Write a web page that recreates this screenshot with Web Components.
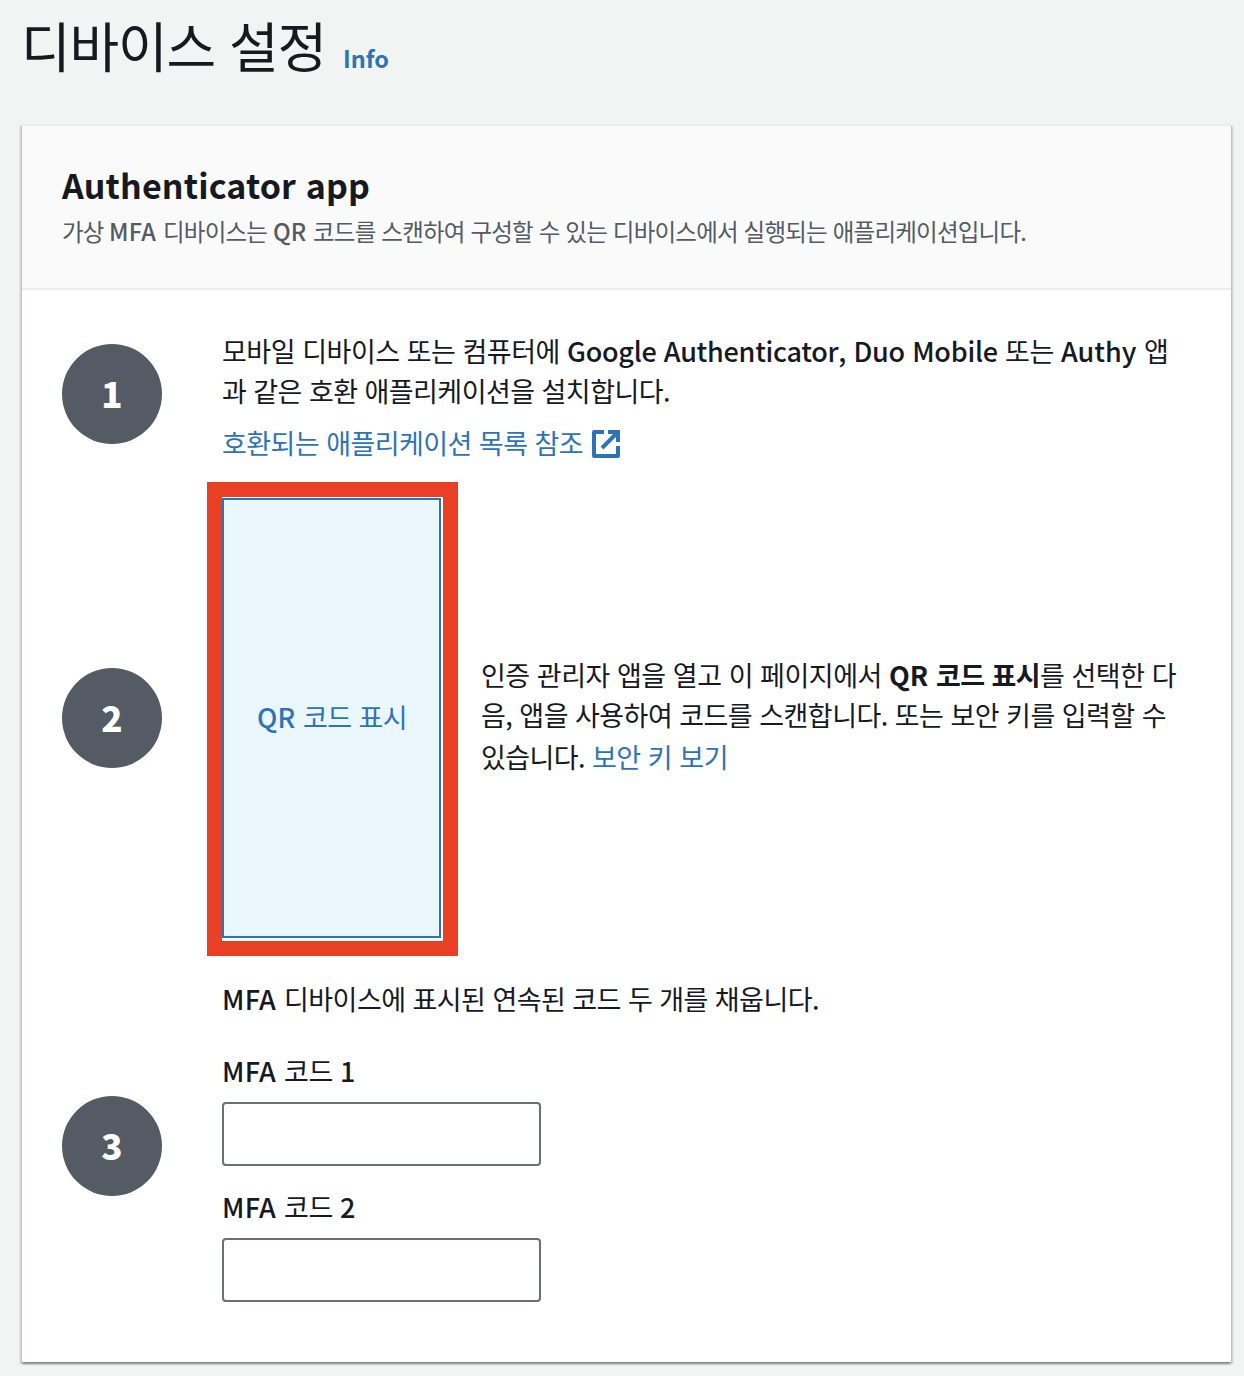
<!DOCTYPE html>
<html lang="ko">
<head>
<meta charset="utf-8">
<title>디바이스 설정</title>
<style>
    body {
        --color-text: #16191f;
        --color-link: #2e73b8;
        --color-muted: #545b64;
        margin: 0;
        min-height: 1376px;
        background: #f2f3f3;
        color: var(--color-text);
        font: 400 27px/40px "Noto Sans CJK KR", "Noto Sans", sans-serif;
    }
</style>
</head>
<body>

<mfa-page>
    <page-heading slot="heading">
        <text-run w="305">디바이스 설정</text-run>
        <text-run slot="info" w="46">Info</text-run>
    </page-heading>

    <setup-card>
        <text-run slot="title" w="308">Authenticator app</text-run>
        <text-line slot="description"><text-run w="47">가상 </text-run><text-run latin w="54">MFA </text-run><text-run w="110">디바이스는 </text-run><text-run latin w="40">QR </text-run><text-run w="713">코드를 스캔하여 구성할 수 있는 디바이스에서 실행되는 애플리케이션입니다.</text-run></text-line>

        <setup-step number="1" style="height: 140px">
            <div style="padding-top: 6px">
                <text-line><text-run w="345">모바일 디바이스 또는 컴퓨터에 </text-run><text-run latin w="438">Google Authenticator, Duo Mobile </text-run><text-run w="56">또는 </text-run><text-run latin w="83">Authy </text-run><text-run w="25">앱</text-run></text-line>
                <text-line><text-run w="448">과 같은 호환 애플리케이션을 설치합니다.</text-run></text-line>
                <link-text external style="margin-top: 12px"><text-run w="361">호환되는 애플리케이션 목록 참조</text-run></link-text>
            </div>
        </setup-step>

        <setup-step number="2" style="height: 440px; margin-top: 34px">
            <qr-button><text-run latin w="46">QR </text-run><text-run w="104">코드 표시</text-run></qr-button>
            <div style="padding: 0 0 4px 40px">
                <text-line><text-run w="408">인증 관리자 앱을 열고 이 페이지에서 </text-run><b><text-run w="47">QR </text-run><text-run w="104">코드 표시</text-run></b><text-run w="136">를 선택한 다</text-run></text-line>
                <text-line><text-run w="685">음, 앱을 사용하여 코드를 스캔합니다. 또는 보안 키를 입력할 수</text-run></text-line>
                <text-line style="margin-top: 2px"><text-run w="111">있습니다. </text-run><link-text><text-run w="136">보안 키 보기</text-run></link-text></text-line>
            </div>
        </setup-step>

        <setup-step number="3" style="height: 332px; margin-top: 42px">
            <div>
                <text-line style="line-height: 38px"><text-run latin w="62">MFA </text-run><text-run w="535">디바이스에 표시된 연속된 코드 두 개를 채웁니다.</text-run></text-line>
                <code-field style="margin-top: 34px"><text-run latin w="62">MFA </text-run><text-run w="56">코드 </text-run><text-run latin w="16">1</text-run></code-field>
                <code-field style="margin: 22px 0 10px"><text-run latin w="62">MFA </text-run><text-run w="56">코드 </text-run><text-run latin w="16">2</text-run></code-field>
            </div>
        </setup-step>
    </setup-card>
</mfa-page>

<script>
class BaseElement extends HTMLElement {

    constructor() {
        super();
        this.attachShadow({mode: 'open'});
    }

    connectedCallback() {
        this.shadowRoot.innerHTML = `<style>${this.css}</style>${this.template}`;
    }

    get css() { return ''; }

    get template() { return '<slot></slot>'; }

}

class MfaPage extends BaseElement {

    get css() {
        return `
            :host { display: block; padding: 5px 13px 14px 22px; }
        `;
    }

    get template() {
        return `<slot name="heading"></slot><slot></slot>`;
    }

}

class PageHeading extends BaseElement {

    get css() {
        return `
            :host { display: block; height: 119px; margin-left: -1px; }
            h1 {
                display: flex;
                align-items: baseline;
                gap: 17px;
                margin: 0;
                font-size: 54px; font-weight: 400; line-height: 80px;
            }
            .info { color: var(--color-link); font-size: 23.5px; font-weight: 700; }
        `;
    }

    get template() {
        return `<h1><span><slot></slot></span><span class="info"><slot name="info"></slot></span></h1>`;
    }

}

class SetupCard extends BaseElement {

    get css() {
        return `
            :host {
                display: block;
                box-sizing: border-box;
                height: 1238px;
                background: #fff;
                border-top: 2px solid #eaeded;
                box-shadow: 0 2px 2px rgba(0, 28, 36, 0.3), 2px 2px 2px rgba(0, 28, 36, 0.15), -2px 2px 2px rgba(0, 28, 36, 0.15);
            }
            header {
                box-sizing: border-box;
                height: 164px;
                padding: 36px 40px 0;
                background: #fafafa;
                border-bottom: 2px solid #eaeded;
            }
            h2 { margin: 0; font-size: 34px; font-weight: 700; line-height: 46px; }
            .description { padding-top: 1px; color: var(--color-muted); font-size: 23.5px; line-height: 44px; }
            .steps { padding: 34px 40px 0; }
        `;
    }

    get template() {
        return `
            <header>
                <h2><slot name="title"></slot></h2>
                <div class="description"><slot name="description"></slot></div>
            </header>
            <div class="steps"><slot></slot></div>
        `;
    }

}

class SetupStep extends BaseElement {

    get css() {
        return `
            :host { display: grid; grid-template-columns: 100px 1fr; gap: 60px; align-items: center; }
            .number {
                display: flex;
                align-items: center;
                justify-content: center;
                box-sizing: border-box;
                height: 100px;
                padding-bottom: 3px;
                border-radius: 50%;
                background: var(--color-muted);
                color: #fff;
                font-size: 35px; font-weight: 900;
            }
            .content { display: flex; align-items: center; }
        `;
    }

    get template() {
        return `
            <div class="number">${this.getAttribute('number')}</div>
            <div class="content"><slot></slot></div>
        `;
    }

}

class TextLine extends BaseElement {

    get css() {
        return `
            :host { display: block; white-space: nowrap; }
        `;
    }

}

class LinkText extends BaseElement {

    get css() {
        return `
            :host { display: inline-block; color: var(--color-link); }
            :host([external]) { display: flex; align-items: center; gap: 9px; }
            svg { display: block; width: 28px; height: 28px; margin-top: 2px; }
        `;
    }

    get template() {
        const icon = `
            <svg viewBox="0 0 28 28" fill="none" stroke="currentColor" stroke-width="4">
                <path d="M12 2H2v24h24V16" stroke-linejoin="round"/>
                <path d="M16 2h10v10M25 3L10 18"/>
            </svg>
        `;
        return `<slot></slot>${this.hasAttribute('external') ? icon : ''}`;
    }

}

class QrButton extends BaseElement {

    get css() {
        return `
            :host { display: block; position: relative; flex: none; }
            button {
                display: block;
                width: 219px; height: 440px;
                padding: 0 0 2px 1px;
                border: 2px solid var(--color-link);
                background: #eaf8fe;
                color: var(--color-link);
                font: inherit;
            }
            .marker {
                position: absolute;
                inset: -16px -17px -18px -15px;
                border: 15px solid #e93f25;
                pointer-events: none;
            }
        `;
    }

    get template() {
        return `<button type="button"><slot></slot></button><div class="marker"></div>`;
    }

}

class CodeField extends BaseElement {

    get css() {
        return `
            :host { display: block; }
            label { display: block; line-height: 38px; white-space: nowrap; }
            input {
                display: block;
                box-sizing: border-box;
                width: 319px; height: 64px;
                margin: 12px 0 0;
                border: 2px solid #687078;
                border-radius: 4px;
                background: #fff;
            }
        `;
    }

    get template() {
        return `<label><slot></slot></label><input type="text">`;
    }

}

// Spreads its letters so that the run takes exactly "w" pixels
class TextRun extends BaseElement {

    connectedCallback() {
        super.connectedCallback();
        const width = Number(this.getAttribute('w'));
        const natural = this.getBoundingClientRect().width;
        this.style.letterSpacing = `${(width - natural) / this.textContent.length}px`;
    }

    get css() {
        return `
            :host { display: inline-block; white-space: pre; }
            :host([latin]) { font-weight: 500; }
        `;
    }

}

customElements.define('mfa-page', MfaPage);
customElements.define('page-heading', PageHeading);
customElements.define('setup-card', SetupCard);
customElements.define('setup-step', SetupStep);
customElements.define('text-line', TextLine);
customElements.define('link-text', LinkText);
customElements.define('qr-button', QrButton);
customElements.define('code-field', CodeField);
customElements.define('text-run', TextRun);
</script>
</body>
</html>
